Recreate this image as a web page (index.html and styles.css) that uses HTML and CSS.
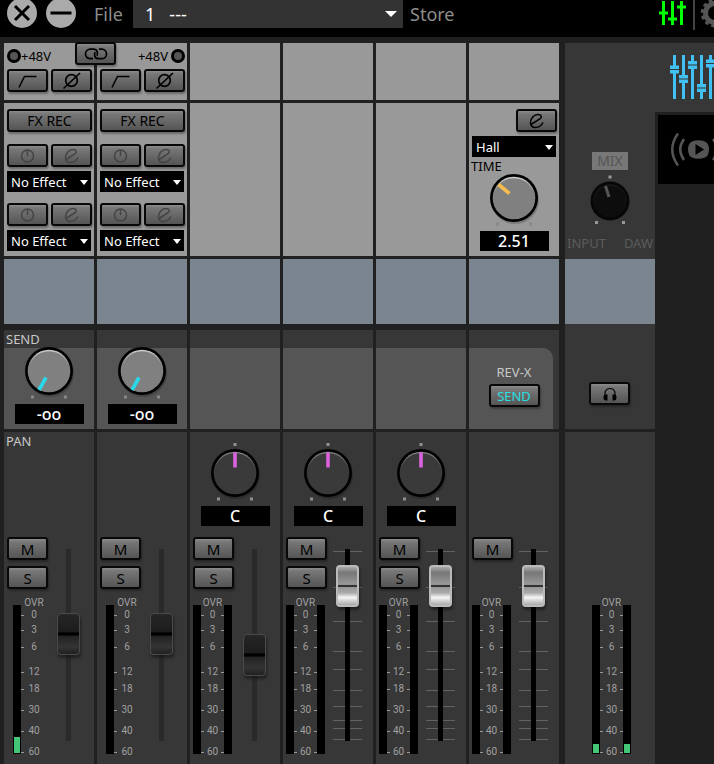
FILE: index.html
```html
<!DOCTYPE html>
<html lang="en">
<head>
<meta charset="utf-8">
<title>Mixer</title>
<link rel="stylesheet" href="styles.css">
</head>
<body>
<svg class="defs" aria-hidden="true">
  <defs>
    <linearGradient id="rim" x1="0" y1="0" x2="0" y2="1"><stop offset="0" stop-color="#d0d0d0"/><stop offset=".35" stop-color="#858585"/><stop offset="1" stop-color="#7c7c7c"/></linearGradient>
    <linearGradient id="rim-dark" x1="0" y1="0" x2="0" y2="1"><stop offset="0" stop-color="#8a8a8a"/><stop offset=".4" stop-color="#3c3c3c"/><stop offset="1" stop-color="#383838"/></linearGradient>
  </defs>
  <symbol id="knob" viewBox="0 0 56 60">
    <circle cx="29" cy="32" r="24" fill="#000" opacity=".2"/>
    <circle cx="28" cy="30" r="24" fill="#000"/>
    <circle cx="28" cy="30" r="21.3" fill="url(#rim)"/>
    <circle cx="28" cy="30.5" r="20.3" fill="#808080"/>
    <path d="M10 54.500h3v3h-3zM43 54.500h3v3h-3z" fill="#888"/>
  </symbol>
  <symbol id="knob-pan" viewBox="0 0 56 60">
    <circle cx="29" cy="32" r="24" fill="#000" opacity=".2"/>
    <circle cx="28" cy="30" r="24" fill="#000"/>
    <circle cx="28" cy="30" r="21.3" fill="url(#rim-dark)"/>
    <circle cx="28" cy="30.5" r="20.5" fill="#3a3a3a"/>
    <path d="M10 54.500h3v3h-3zM43 54.500h3v3h-3zM26.500 0h3v3h-3z" fill="#909090"/>
    <path d="M28 9.500v15" stroke="#dd62df" stroke-width="3.600"/>
  </symbol>
  <symbol id="hpf" viewBox="0 0 24 20"><path d="M3 16.500 8.500 5.500H20.500" fill="none" stroke="#000" stroke-width="1.500"/></symbol>
  <symbol id="phase" viewBox="0 0 24 20"><circle cx="11.500" cy="9.500" r="5.800" fill="none" stroke="#000" stroke-width="1.700"/><path d="M3.500 17.500 20 2" stroke="#000" stroke-width="1.700"/></symbol>
  <symbol id="power" viewBox="0 0 24 20"><circle cx="11.500" cy="10" r="6" fill="none" stroke="currentColor" stroke-width="1.500"/><path d="M11.500 4v6" stroke="currentColor" stroke-width="1.500"/></symbol>
  <symbol id="edit" viewBox="0 0 24 20"><path d="M6 13.500 15.500 7.500C17 6.300 16.500 3.500 13 3.500 9 3.500 5.500 7.500 5.500 11.500 5.500 14.500 7.500 16.500 10.500 16.500 14 16.500 16.500 14.500 18 11.500" fill="none" stroke="currentColor" stroke-width="1.500"/></symbol>
  <symbol id="ticks" viewBox="0 0 29 192"><path d="M0 2.500h29M0 38.500h29M0 72.500h29M0 102.500h29M0 120.500h29M0 141.500h29M0 157.500h29M0 171.500h29M0 179.500h29M0 190.500h29" stroke="#626262"/></symbol>
</svg>

<header class="topbar">
  <button class="round" aria-label="Close"><svg viewBox="0 0 30 30"><circle cx="15" cy="15" r="15" fill="#aaa"/><path d="m8 8 14 14M22 8 8 22" stroke="#000" stroke-width="3"/></svg></button>
  <button class="round" aria-label="Minimize"><svg viewBox="0 0 30 30"><circle cx="15" cy="15" r="15" fill="#aaa"/><path d="M4.500 15h21" stroke="#000" stroke-width="3"/></svg></button>
  <label class="file-label" for="file">File</label>
  <span class="pick file-pick"><select id="file"><option>1 &nbsp;&nbsp;---</option></select></span>
  <button class="store">Store</button>
  <nav class="top-icons">
    <button class="plain" aria-label="Mixer"><svg width="28" height="28" viewBox="0 0 28 28" fill="none" stroke="#0f0" stroke-width="3"><path d="M5.500 1v24M14.500 1v24M23.500 1v24"/><path d="M1 13h9M10 19h9M19 7h9"/></svg></button>
    <span class="divider"></span>
    <button class="plain" aria-label="Settings"><svg width="30" height="30" viewBox="0 0 30 30"><circle cx="15" cy="13" r="9.500" fill="none" stroke="#555" stroke-width="5"/><circle cx="15" cy="13" r="12.500" fill="none" stroke="#555" stroke-width="3.500" stroke-dasharray="3.600 2.945"/></svg></button>
  </nav>
</header>

<main class="mixer">
  <section class="channel">
    <div class="cell light head">
      <div class="phantom"><button class="led" aria-label="Phantom power 1"></button>+48V</div>
      <div class="pair"><button class="btn" aria-label="High-pass filter"><svg class="ico"><use href="#hpf"/></svg></button><button class="btn" aria-label="Phase"><svg class="ico"><use href="#phase"/></svg></button></div>
      <button class="btn link" aria-label="Link channels"><svg class="ico" viewBox="0 0 24 20" fill="none" stroke="#000" stroke-width="1.700"><path d="M9 14.700H6.300a4.800 4.800 0 0 1 0-9.600H9.500C13.500 5.100 14 9 13 11.800"/><path d="M15 5.100h2.700a4.800 4.800 0 0 1 0 9.600h-3.200C10.500 14.700 10 10.800 11 8"/></svg></button>
    </div>
    <div class="cell light fx">
      <button class="btn wide">FX REC</button>
      <div class="slot">
        <div class="pair"><button class="btn off" aria-label="Effect 1 on"><svg class="ico"><use href="#power"/></svg></button><button class="btn off" aria-label="Edit effect 1"><svg class="ico"><use href="#edit"/></svg></button></div>
        <span class="pick"><select aria-label="Effect 1"><option>No Effect</option></select></span>
      </div>
      <div class="slot">
        <div class="pair"><button class="btn off" aria-label="Effect 2 on"><svg class="ico"><use href="#power"/></svg></button><button class="btn off" aria-label="Edit effect 2"><svg class="ico"><use href="#edit"/></svg></button></div>
        <span class="pick"><select aria-label="Effect 2"><option>No Effect</option></select></span>
      </div>
    </div>
    <div class="cell blue"></div>
    <div class="cell send dial">
      <label class="caption" for="send1">SEND</label>
      <svg class="knob"><use href="#knob"/><path d="M25 36.500 18 49" stroke="#28d8e8" stroke-width="3.600"/></svg>
      <input class="turn" id="send1" type="range" value="0">
      <output class="value">-oo</output>
    </div>
    <div class="cell strip">
      <div class="dial pan"><span class="caption">PAN</span></div>
      <div class="levels">
        <div class="left">
          <div class="mutes"><button class="btn">M</button><button class="btn">S</button></div>
          <div class="meter mono"><div class="bar"><i style="height:16px"></i></div><ul class="scale"><li>OVR</li><li>0</li><li>3</li><li>6</li><li>12</li><li>18</li><li>30</li><li>40</li><li>60</li></ul></div>
        </div>
        <div class="fader disabled"><input type="range" max="150" value="86" aria-label="Fader 1"></div>
      </div>
    </div>
  </section>

  <section class="channel">
    <div class="cell light head">
      <div class="phantom right">+48V<button class="led" aria-label="Phantom power 2"></button></div>
      <div class="pair"><button class="btn" aria-label="High-pass filter"><svg class="ico"><use href="#hpf"/></svg></button><button class="btn" aria-label="Phase"><svg class="ico"><use href="#phase"/></svg></button></div>
    </div>
    <div class="cell light fx">
      <button class="btn wide">FX REC</button>
      <div class="slot">
        <div class="pair"><button class="btn off" aria-label="Effect 1 on"><svg class="ico"><use href="#power"/></svg></button><button class="btn off" aria-label="Edit effect 1"><svg class="ico"><use href="#edit"/></svg></button></div>
        <span class="pick"><select aria-label="Effect 1"><option>No Effect</option></select></span>
      </div>
      <div class="slot">
        <div class="pair"><button class="btn off" aria-label="Effect 2 on"><svg class="ico"><use href="#power"/></svg></button><button class="btn off" aria-label="Edit effect 2"><svg class="ico"><use href="#edit"/></svg></button></div>
        <span class="pick"><select aria-label="Effect 2"><option>No Effect</option></select></span>
      </div>
    </div>
    <div class="cell blue"></div>
    <div class="cell send dial">
      <svg class="knob"><use href="#knob"/><path d="M25 36.500 18 49" stroke="#28d8e8" stroke-width="3.600"/></svg>
      <input class="turn" type="range" value="0" aria-label="Send 2">
      <output class="value">-oo</output>
    </div>
    <div class="cell strip">
      <div class="dial pan"></div>
      <div class="levels">
        <div class="left">
          <div class="mutes"><button class="btn">M</button><button class="btn">S</button></div>
          <div class="meter mono"><div class="bar"></div><ul class="scale"><li>OVR</li><li>0</li><li>3</li><li>6</li><li>12</li><li>18</li><li>30</li><li>40</li><li>60</li></ul></div>
        </div>
        <div class="fader disabled"><input type="range" max="150" value="86" aria-label="Fader 2"></div>
      </div>
    </div>
  </section>

  <section class="channel">
    <div class="cell light head"></div>
    <div class="cell light fx"></div>
    <div class="cell blue"></div>
    <div class="cell send"></div>
    <div class="cell strip">
      <div class="dial pan"><svg class="knob"><use href="#knob-pan"/></svg><input class="turn" type="range" aria-label="Pan 3"><output class="value">C</output></div>
      <div class="levels">
        <div class="left">
          <div class="mutes"><button class="btn">M</button><button class="btn">S</button></div>
          <div class="meter"><div class="bar"></div><ul class="scale"><li>OVR</li><li>0</li><li>3</li><li>6</li><li>12</li><li>18</li><li>30</li><li>40</li><li>60</li></ul><div class="bar"></div></div>
        </div>
        <div class="fader disabled"><input type="range" max="150" value="65" aria-label="Fader 3"></div>
      </div>
    </div>
  </section>

  <section class="channel">
    <div class="cell light head"></div>
    <div class="cell light fx"></div>
    <div class="cell blue"></div>
    <div class="cell send"></div>
    <div class="cell strip">
      <div class="dial pan"><svg class="knob"><use href="#knob-pan"/></svg><input class="turn" type="range" aria-label="Pan 4"><output class="value">C</output></div>
      <div class="levels">
        <div class="left">
          <div class="mutes"><button class="btn">M</button><button class="btn">S</button></div>
          <div class="meter"><div class="bar"></div><ul class="scale"><li>OVR</li><li>0</li><li>3</li><li>6</li><li>12</li><li>18</li><li>30</li><li>40</li><li>60</li></ul><div class="bar"></div></div>
        </div>
        <div class="fader"><svg class="ticks"><use href="#ticks"/></svg><input type="range" max="150" value="134" aria-label="Fader 4"></div>
      </div>
    </div>
  </section>

  <section class="channel">
    <div class="cell light head"></div>
    <div class="cell light fx"></div>
    <div class="cell blue"></div>
    <div class="cell send"></div>
    <div class="cell strip">
      <div class="dial pan"><svg class="knob"><use href="#knob-pan"/></svg><input class="turn" type="range" aria-label="Pan 5"><output class="value">C</output></div>
      <div class="levels">
        <div class="left">
          <div class="mutes"><button class="btn">M</button><button class="btn">S</button></div>
          <div class="meter"><div class="bar"></div><ul class="scale"><li>OVR</li><li>0</li><li>3</li><li>6</li><li>12</li><li>18</li><li>30</li><li>40</li><li>60</li></ul><div class="bar"></div></div>
        </div>
        <div class="fader"><svg class="ticks"><use href="#ticks"/></svg><input type="range" max="150" value="134" aria-label="Fader 5"></div>
      </div>
    </div>
  </section>

  <section class="channel">
    <div class="cell light head"></div>
    <div class="cell light fx reverb">
      <button class="btn edit" aria-label="Edit reverb"><svg class="ico"><use href="#edit"/></svg></button>
      <span class="pick"><select aria-label="Reverb type"><option>Hall</option></select></span>
      <div class="dial">
        <label class="caption" for="time">TIME</label>
        <svg class="knob"><use href="#knob"/><path d="M12.500 16.500 23.500 25.500" stroke="#f5bc4d" stroke-width="3.600"/></svg>
        <input class="turn" id="time" type="range">
        <output class="value">2.51</output>
      </div>
    </div>
    <div class="cell blue"></div>
    <div class="cell send last">
      <div class="return"><span>REV-X</span><button class="btn on">SEND</button></div>
    </div>
    <div class="cell strip">
      <div class="dial pan"></div>
      <div class="levels">
        <div class="left">
          <div class="mutes"><button class="btn">M</button></div>
          <div class="meter"><div class="bar"></div><ul class="scale"><li>OVR</li><li>0</li><li>3</li><li>6</li><li>12</li><li>18</li><li>30</li><li>40</li><li>60</li></ul><div class="bar"></div></div>
        </div>
        <div class="fader"><svg class="ticks"><use href="#ticks"/></svg><input type="range" max="150" value="134" aria-label="Reverb fader"></div>
      </div>
    </div>
  </section>

  <section class="channel master">
    <div class="cell mix">
      <button class="mix-tag">MIX</button>
      <svg class="mix-knob" viewBox="0 0 40 50"><circle cx="20" cy="27" r="19.500" fill="#070707"/><circle cx="20" cy="26.500" r="16.500" fill="#151515"/><circle cx="20" cy="27.500" r="15.500" fill="#0d0d0d"/><path d="M15.500 12 19 23" stroke="#555" stroke-width="3"/><path d="M18.500 1.500h3v3h-3zM5 47h3v3H5zM32 47h3v3h-3z" fill="#999"/></svg>
      <div class="ends"><span>INPUT</span><span>DAW</span></div>
    </div>
    <div class="cell blue"></div>
    <div class="cell phones"><button class="btn" aria-label="Phones"><svg class="ico" viewBox="0 0 24 20"><path d="M8 15C5.500 10 7 4.500 12 4.500S18.500 10 16 15" fill="none" stroke="#000" stroke-width="1.200"/><path d="M9.500 10.500v6H8q-2.500 0-2.500-3t2.500-3zM14.500 10.500v6H16q2.500 0 2.500-3t-2.500-3z" fill="#000"/></svg></button></div>
    <div class="cell strip">
      <div class="dial pan"></div>
      <div class="mutes"></div>
      <div class="meter"><div class="bar"><i style="height:9px"></i></div><ul class="scale"><li>OVR</li><li>0</li><li>3</li><li>6</li><li>12</li><li>18</li><li>30</li><li>40</li><li>60</li></ul><div class="bar"><i style="height:9px"></i></div></div>
    </div>
  </section>

  <nav class="tabs">
    <button class="tab active" aria-label="Mixer view"><svg width="50" height="46" viewBox="0 0 50 46"><g fill="#41c1f3"><path d="M4 0h3v44H4zM13 0h3v44h-3zM22 0h3v44h-3zM31 0h3v44h-3zM40 0h3v44h-3z"/><path d="M1 10.500h9v8H1zM10 20h9v8h-9zM19 6h9v8h-9zM28 29h9v8h-9zM37 4.500h9v8h-9z"/></g><path d="M0 14.500h10M10 24h9M19 10h9M28 33h9M37 8.500h9" stroke="#373737"/></svg></button>
    <button class="tab" aria-label="Loopback"><svg width="59" height="36" viewBox="0 0 59 36"><path d="M9 1.500Q-2.500 17.500 9 33.500M15 7Q7.500 17.500 15 28M44 7Q51.500 17.500 44 28M50 1.500Q61.500 17.500 50 33.500" fill="none" stroke="#555" stroke-width="2.500"/><path d="M23 9.500q6.500-2.500 13 0 4 2 4 8t-4 8q-6.500 2.500-13 0-4-2-4-8t4-8z" fill="#555"/><path d="m26.500 12 8.500 5.500-8.500 5.500z" fill="#000"/></svg></button>
  </nav>
</main>
</body>
</html>
```
FILE: styles.css
```css
* { box-sizing: border-box; }
body {
  margin: 0;
  min-height: 100vh;
  display: flex;
  flex-direction: column;
  background: #202020;
  color: #c8c8c8;
  font: 13px/18px "Noto Sans", "Open Sans", sans-serif;
  overflow: hidden;
}
button, select, input { font: inherit; color: inherit; margin: 0; }
button { padding: 0; border: 0; background: none; }
svg { display: block; }
.defs { position: absolute; width: 0; height: 0; }

/* top bar */
.topbar {
  display: flex;
  height: 37px;
  padding-left: 7px;
  background: #000;
  font-size: 18px;
  line-height: 28px;
  color: #8d8d8d;
  overflow: hidden;
}
.topbar > * { flex-shrink: 0; }
.round { width: 30px; height: 30px; margin: -2px 9px 0 0; }
.file-label { width: 39px; margin-left: 9px; }
.store { height: 28px; margin-left: 7px; }
.top-icons { display: flex; width: 56px; margin-left: auto; }
.top-icons > * { flex-shrink: 0; }
.plain { display: block; height: 28px; }
.divider { width: 2px; height: 30px; margin: 0 5px 0 7px; background: #444; }

/* drop-downs */
.pick { position: relative; display: block; width: 84px; height: 21px; }
.pick select {
  display: block;
  width: 100%;
  height: 100%;
  padding: 0 4px;
  border: 0;
  border-radius: 0;
  background: #000;
  color: #fff;
  appearance: none;
}
.pick::after {
  content: "";
  position: absolute;
  right: 3px;
  top: 9px;
  width: 8px;
  height: 5px;
  background: #fff;
  clip-path: polygon(0 0, 100% 0, 50% 100%);
  pointer-events: none;
}
.file-pick { width: 270px; height: 28px; }
.file-pick select { padding: 0 12px; background: #333; }
.file-pick::after { right: 6px; top: 11px; width: 12px; height: 6px; }

/* channel grid */
.mixer { flex: 1; display: flex; margin-top: 6px; padding-left: 4px; }
.channel { flex: 0 0 90px; display: flex; flex-direction: column; gap: 3px; margin-right: 3px; }
.cell { background: #373737; }
.light { background: #999; color: #000; }
.head { position: relative; height: 57px; padding: 0 2px 0 3px; }
.fx { height: 153px; padding: 6px 2px 0 3px; }
.blue { height: 65px; margin-bottom: 3px; background: #7b858f; }
.send { height: 99px; background: linear-gradient(#373737 18px, #555 18px); }
.strip { flex: 1; }

.phantom { display: flex; align-items: center; height: 26px; }
.phantom.right { justify-content: flex-end; gap: 3px; }
.led { width: 14px; height: 14px; border: 3px solid #000; border-radius: 50%; background: #555; }
.pair { display: flex; gap: 3px; }
.btn {
  display: flex;
  align-items: center;
  justify-content: center;
  width: 41px;
  height: 23px;
  border: 2px solid #080808;
  border-radius: 3px;
  background: linear-gradient(#8c8c8c, #777 15%, #555);
  box-shadow: 1px 2px 2px rgba(0, 0, 0, .3);
  color: #000;
}
.ico { width: 24px; height: 20px; }
.off { color: #444; }
.link { position: absolute; left: 71px; top: -1px; z-index: 1; }
.wide { width: 85px; font-size: 14px; }
.slot { display: grid; gap: 4px; margin-top: 11px; }
.wide + .slot { margin-top: 12px; }
.edit { margin: 0 0 4px auto; }

/* rotary controls: caption, dial and hidden slider share one grid area */
.dial { display: grid; grid-template-rows: 71px 23px; justify-items: center; }
.dial > * { grid-area: 1 / 1; }
.caption { justify-self: start; padding-left: 2px; }
.knob { width: 56px; height: 60px; margin-top: 11px; }
.turn { width: 56px; height: 60px; margin-top: 11px; opacity: 0; }
.value {
  grid-area: 2 / 1;
  align-self: end;
  width: 69px;
  height: 20px;
  background: #000;
  color: #fff;
  font-size: 16px;
  font-weight: 500;
  line-height: 20px;
  text-align: center;
}
.send.dial { align-content: start; }
.reverb .dial { margin: 0 -2px 0 -3px; }
.pan { margin-bottom: 11px; }

.last { background: #373737; padding-top: 18px; }
.return {
  display: flex;
  flex-direction: column;
  align-items: center;
  gap: 3px;
  width: 84px;
  height: 81px;
  padding: 15px 0 0 6px;
  border-radius: 0 10px 0 0;
  background: #555;
}
.on { width: 51px; color: #28e0e0; }

/* levels */
.levels { display: flex; }
.left { width: 50px; padding-left: 3px; flex-shrink: 0; }
.mutes { display: grid; align-content: start; gap: 6px; height: 52px; margin-bottom: 7px; }
.mutes .btn { font-size: 15px; }
.meter { display: flex; height: 161px; }
.mono { padding-left: 6px; }
.bar { display: flex; align-items: flex-end; width: 8px; margin: 9px 0 3px; padding: 1px; background: #000; }
.bar i { flex: 1; background: #43c777; }
.scale {
  display: grid;
  grid-template-rows: 12px 15px 17px 25px 17px 21px 21px 21px 12px;
  width: 23px;
  margin: 0;
  padding: 1px 0 0;
  list-style: none;
  color: #a0a0a0;
  font-family: Roboto, "Liberation Sans", sans-serif;
  font-size: 10px;
  line-height: 12px;
  text-align: center;
}
.scale li { display: flex; align-items: center; justify-content: space-between; height: 12px; }
.scale li::before, .scale li::after { content: ""; width: 3px; height: 1px; background: #999; }
.scale li:first-child { justify-content: center; }
.scale li:first-child::before, .scale li:first-child::after { display: none; }
.mono .scale { width: 26px; }
.mono .scale li::after { background: none; }

.fader { display: grid; justify-items: center; width: 29px; height: 192px; margin-top: 12px; }
.fader > * { grid-area: 1 / 1; }
.ticks { width: 29px; height: 192px; }
.fader input {
  appearance: none;
  writing-mode: vertical-lr;
  direction: rtl;
  width: 23px;
  height: 192px;
  background: linear-gradient(#000, #000) center / 5px 100% no-repeat;
}
.fader input::-webkit-slider-thumb {
  appearance: none;
  width: 23px;
  height: 42px;
  border: 2px solid #bbb;
  border-radius: 4px;
  background: linear-gradient(#aaa, #777 15%, #999 46%, #333 47%, #333 52%, #999 54%, #aaa 68%, #f4f4f4 80%, #aaa);
  box-shadow: 1px 3px 3px rgba(0, 0, 0, .4);
}
.fader.disabled input { background-image: linear-gradient(#2a2a2a, #2a2a2a); }
.fader.disabled input::-webkit-slider-thumb {
  border: 1px solid #4a4a4a;
  background: linear-gradient(#262626, #1c1c1c 45%, #000 47%, #000 53%, #222 55%, #343434 82%, #202020);
}

/* master */
.master { margin: 0 0 0 3px; }
.mix {
  height: 216px;
  margin-bottom: -3px;
  padding-top: 109px;
  color: #5c5c5c;
}
.mix-tag { display: block; width: 36px; height: 18px; margin: 0 auto; background: #777; color: #555; font-size: 14px; }
.mix-knob { width: 40px; height: 50px; margin: 4px auto 10px; }
.ends { display: flex; justify-content: space-between; padding: 0 2px; }
.master .blue { margin-bottom: -3px; }
.phones { height: 105px; padding: 58px 0 0 24px; }
.master .meter { padding-left: 27px; }
.master .mutes { margin-bottom: 7px; }

/* view tabs */
.tabs { flex: 1; min-width: 0; }
.tab { display: flex; align-items: center; width: 100%; height: 69px; padding-left: 11px; border-left: 3px solid #202020; background: #000; overflow: hidden; }
.tab svg { flex-shrink: 0; }
.active { margin-bottom: 3px; border-left-color: #373737; background: #373737; }
```
